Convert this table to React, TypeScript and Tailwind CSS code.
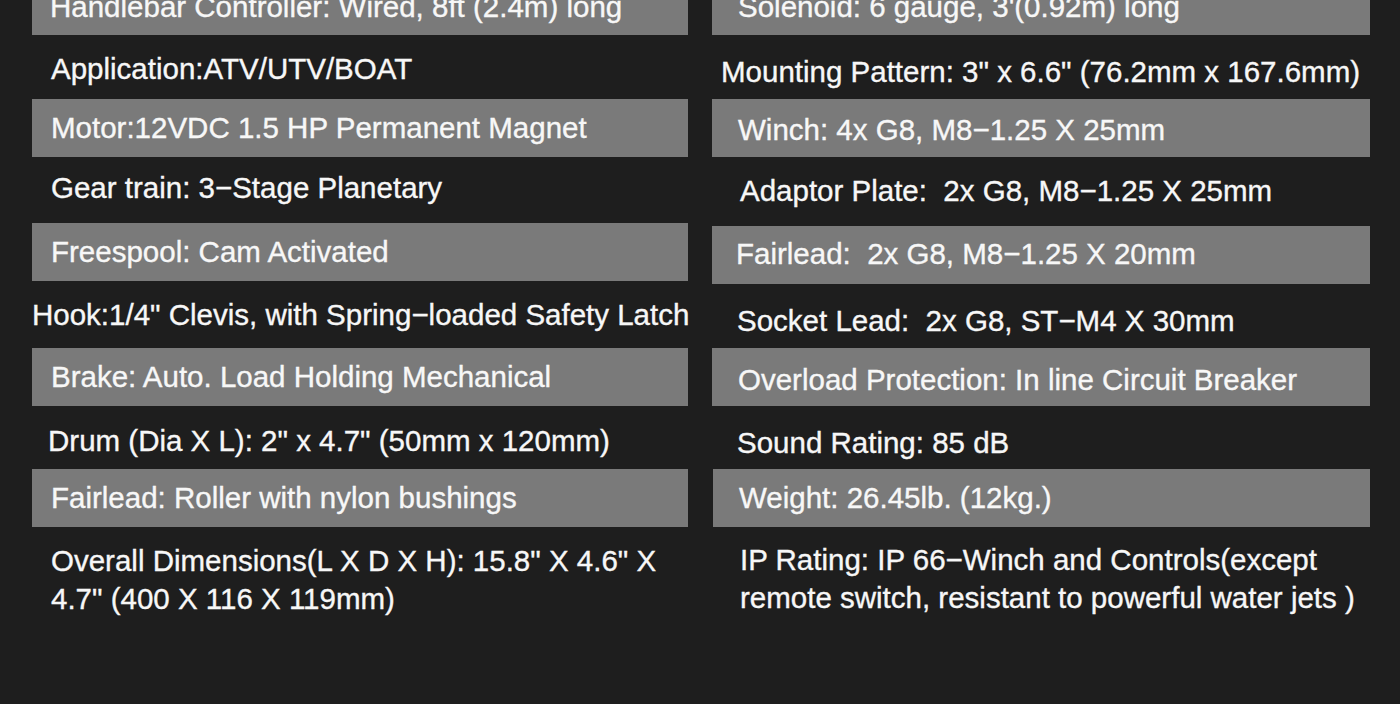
const font = { fontFamily: '"Liberation Sans", Arial, Helvetica, sans-serif' };

type Row = { text: React.ReactNode; bar?: boolean; cls: string };

const left: Row[] = [
  { text: "Handlebar Controller: Wired, 8ft (2.4m) long", bar: true, cls: "h-[58px] pl-[18px] pt-[2px]" },
  { text: "Application:ATV/UTV/BOAT", cls: "h-[64px] pl-[19px] pt-[4px]" },
  { text: "Motor:12VDC 1.5 HP Permanent Magnet", bar: true, cls: "h-[58px] pl-[19px]" },
  { text: "Gear train: 3−Stage Planetary", cls: "h-[66px] pl-[19px] pb-[4px]" },
  { text: "Freespool: Cam Activated", bar: true, cls: "h-[58px] pl-[19px]" },
  { text: 'Hook:1/4" Clevis, with Spring−loaded Safety Latch', cls: "h-[67px] pl-0" },
  { text: "Brake: Auto. Load Holding Mechanical", bar: true, cls: "h-[58px] pl-[19px]" },
  { text: 'Drum (Dia X L): 2" x 4.7" (50mm x 120mm)', cls: "h-[63px] pl-[16px] pt-[7px]" },
  { text: "Fairlead: Roller with nylon bushings", bar: true, cls: "h-[58px] pl-[19px]" },
];

const right: Row[] = [
  { text: "Solenoid: 6 gauge, 3'(0.92m) long", bar: true, cls: "h-[58px] pl-[26px] pt-[2px]" },
  { text: 'Mounting Pattern: 3" x 6.6" (76.2mm x 167.6mm)', cls: "h-[64px] pl-[9px] pt-[10px]" },
  { text: "Winch: 4x G8, M8−1.25 X 25mm", bar: true, cls: "h-[58px] pl-[26px] pt-[3px]" },
  { text: "Adaptor Plate:  2x G8, M8−1.25 X 25mm", cls: "h-[69px] pl-[28px] pb-[1px]" },
  { text: "Fairlead:  2x G8, M8−1.25 X 20mm", bar: true, cls: "h-[58px] pl-[24px] pb-[2px]" },
  { text: "Socket Lead:  2x G8, ST−M4 X 30mm", cls: "h-[64px] pl-[25px] pt-[10px]" },
  { text: "Overload Protection: In line Circuit Breaker", bar: true, cls: "h-[58px] pl-[26px] pt-[5px]" },
  { text: "Sound Rating: 85 dB", cls: "h-[63px] pl-[25px] pt-[11px]" },
  { text: "Weight: 26.45lb. (12kg.)", bar: true, cls: "h-[58px] pl-[26px] ml-[1px]" },
];

function SpecRow({ row }: { row: Row }) {
  return (
    <div
      className={`flex items-center whitespace-pre ${row.bar ? "bg-[#7a7a7a]" : ""} ${row.cls}`}
    >
      {row.text}
    </div>
  );
}

export default function App() {
  return (
    <div
      className="min-h-[704px] w-[1400px] overflow-hidden bg-[#1e1e1e] text-[29.5px] leading-[38px] text-[#f7f7f7] [-webkit-text-stroke:0.35px_#f7f7f7]"
      style={font}
    >
      <div className="flex gap-[24px] pl-[32px]">
        <div className="-mt-[23px] flex w-[656px] flex-col">
          {left.map((r, i) => (
            <SpecRow key={i} row={r} />
          ))}
          <div className="pl-[19px] pt-[15px]">
            Overall Dimensions(L X D X H): 15.8" X 4.6" X
            <br />
            4.7" (400 X 116 X 119mm)
          </div>
        </div>
        <div className="-mt-[23px] flex w-[658px] flex-col">
          {right.map((r, i) => (
            <SpecRow key={i} row={r} />
          ))}
          <div className="whitespace-pre pl-[28px] pt-[14px]">
            IP Rating: IP 66−Winch and Controls(except
            <br />
            remote switch, resistant to powerful water jets )
          </div>
        </div>
      </div>
    </div>
  );
}
